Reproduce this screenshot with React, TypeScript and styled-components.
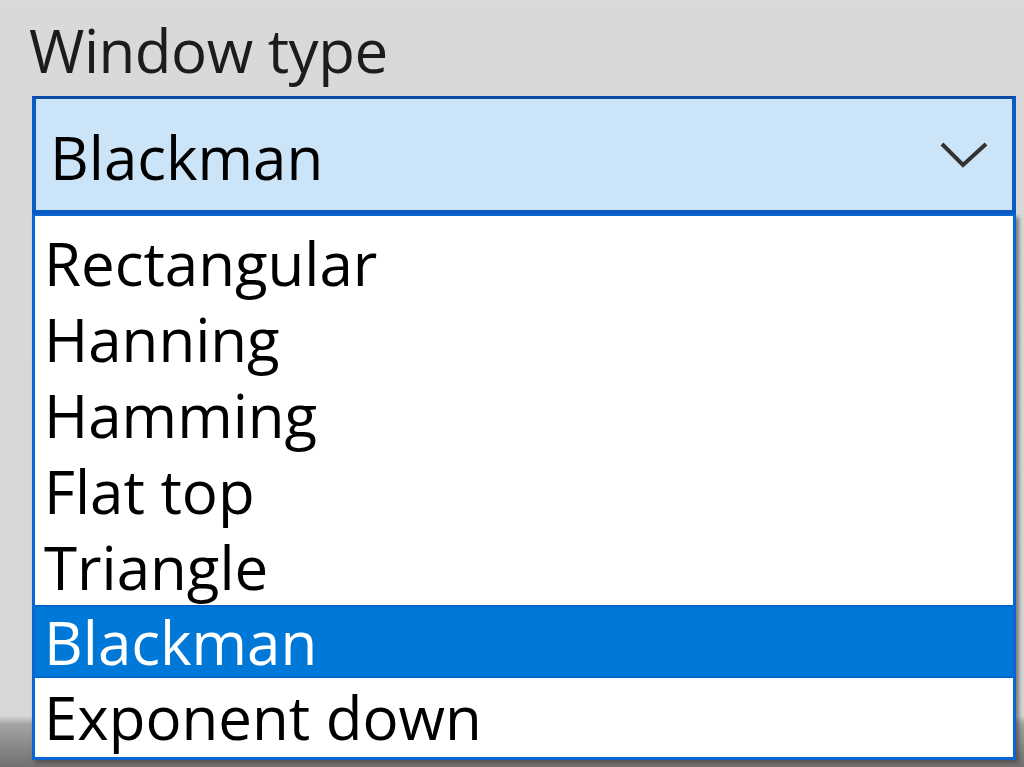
import React from "react";
import styled, { createGlobalStyle } from "styled-components";

const Global = createGlobalStyle`
  html, body {
    margin: 0;
    padding: 0;
    width: 1024px;
    height: 767px;
    overflow: hidden;
  }
  body {
    background: linear-gradient(to bottom, #dad8d9 0px, #d8d6d7 716px, #a4a4a4 724px, #8a8a8a 745px, #727070 767px);
    font-family: "Open Sans", "Noto Sans", sans-serif;
  }
`;

const Panel = styled.div`
  display: flex;
  flex-direction: column;
  width: 984px;
  padding: 8px 0 0 32px;
`;

const Label = styled.div`
  font-size: 60px;
  line-height: 84px;
  height: 88px;
  color: #1c1c1c;
  margin-left: -3px;
  letter-spacing: -0.5px;
`;

const Combo = styled.div`
  box-sizing: border-box;
  height: 118px;
  display: flex;
  align-items: center;
  justify-content: space-between;
  background: #cce4f7;
  border: 4px solid #0a5bc4;
  border-top: 3px solid #0a4aa6;
  padding: 0 24px 0 14px;
  font-size: 60px;
  color: #000;
  letter-spacing: 0;
`;

const ComboText = styled.span`
  line-height: 1;
  padding-top: 4px;
`;

const List = styled.div`
  box-sizing: border-box;
  display: flex;
  flex-direction: column;
  background: #ffffff;
  border: 3px solid #0a64d4;
  border-top: 2px solid #0a64d4;
  padding: 9px 0 2px 0;
  box-shadow: 3px 3px 4px rgba(60, 56, 50, 0.6);
`;

const Item = styled.div<{ $selected?: boolean }>`
  height: ${(p) => (p.$selected ? 73 : 76)}px;
  margin: ${(p) => (p.$selected ? "0 0 1px" : "0")};
  box-sizing: border-box;
  display: flex;
  align-items: center;
  padding-left: 9px;
  font-size: 60px;
  letter-spacing: 0;
  color: ${(p) => (p.$selected ? "#ffffff" : "#000000")};
  background: ${(p) => (p.$selected ? "#0078d7" : "transparent")};
  box-shadow: ${(p) => (p.$selected ? "inset 0 2px 0 #0066cf, inset 0 -2px 0 #0066cf" : "none")};
`;

const Chevron = () => (
  <svg width="48" height="28" viewBox="0 0 48 28">
    <polyline points="2,3 23,24 46,3" fill="none" stroke="#333" strokeWidth="4" strokeLinejoin="miter" />
  </svg>
);

const items = ["Rectangular", "Hanning", "Hamming", "Flat top", "Triangle", "Blackman", "Exponent down"];

export default function App() {
  return (
    <>
      <Global />
      <Panel>
        <Label>Window type</Label>
        <Combo>
          <ComboText>Blackman</ComboText>
          <Chevron />
        </Combo>
        <List>
          {items.map((it) => (
            <Item key={it} $selected={it === "Blackman"}>
              {it}
            </Item>
          ))}
        </List>
      </Panel>
    </>
  );
}
